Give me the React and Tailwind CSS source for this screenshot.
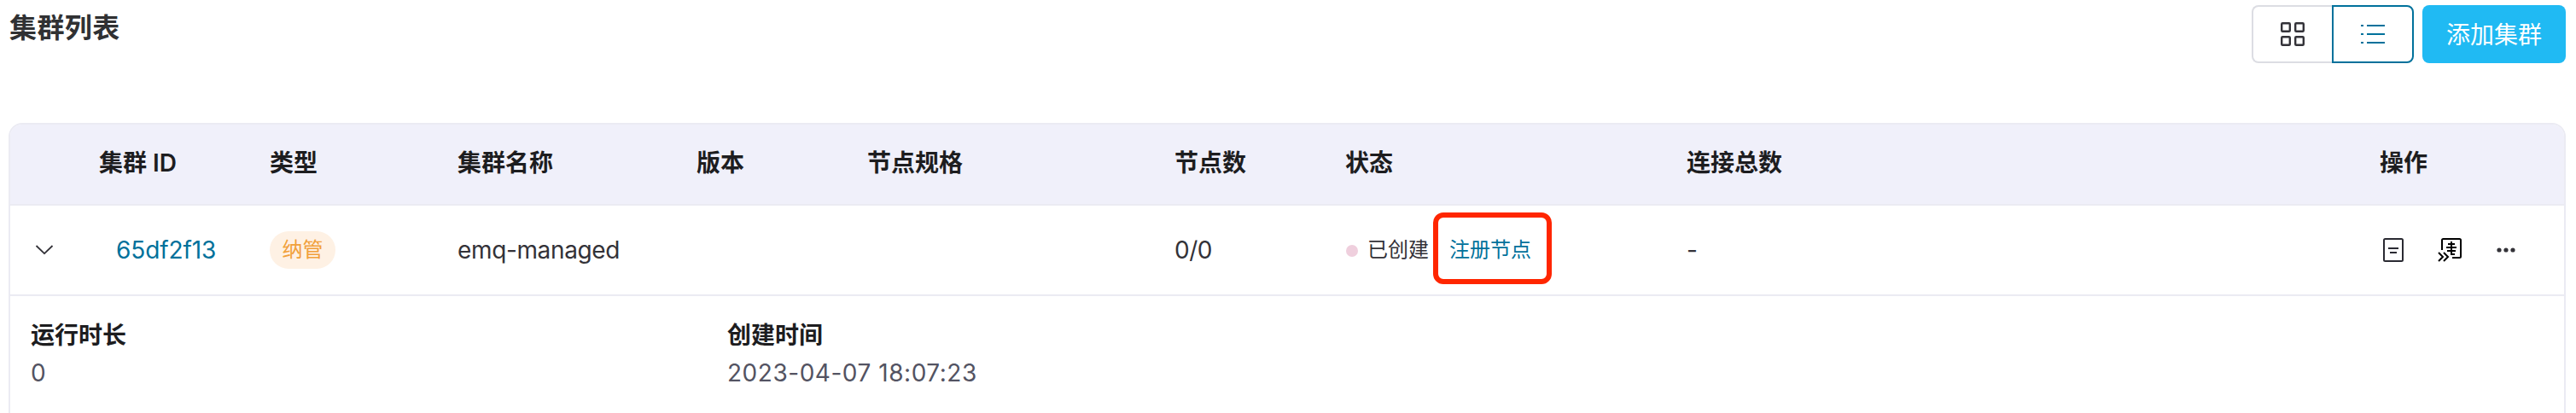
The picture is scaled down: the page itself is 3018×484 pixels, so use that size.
import React from 'react';

const columns = [
  { key: 'expand', title: '', width: 'w-[80px]' },
  { key: 'id', title: '集群 ID', width: 'w-[200px]' },
  { key: 'type', title: '类型', width: 'w-[220px]' },
  { key: 'name', title: '集群名称', width: 'w-[280px]' },
  { key: 'version', title: '版本', width: 'w-[200px]' },
  { key: 'spec', title: '节点规格', width: 'w-[360px]' },
  { key: 'nodes', title: '节点数', width: 'w-[200px]' },
  { key: 'status', title: '状态', width: 'w-[400px]' },
  { key: 'connections', title: '连接总数', width: 'w-[812px]' },
  { key: 'actions', title: '操作', width: 'w-[240px]' },
];

function GridIcon() {
  return (
    <svg width="28" height="28" viewBox="0 0 28 28" fill="none" stroke="#333238" strokeWidth="2.4">
      <rect x="1.2" y="1.2" width="9.6" height="9.6" rx="1" />
      <rect x="17.2" y="1.2" width="9.6" height="9.6" rx="1" />
      <rect x="1.2" y="17.2" width="9.6" height="9.6" rx="1" />
      <rect x="17.2" y="17.2" width="9.6" height="9.6" rx="1" />
    </svg>
  );
}

function ListIcon() {
  return (
    <svg width="28" height="24" viewBox="0 0 28 24" fill="#00719b">
      <rect x="0" y="1" width="3" height="2" />
      <rect x="7" y="1" width="21" height="2" />
      <rect x="0" y="11" width="3" height="2" />
      <rect x="7" y="11" width="21" height="2" />
      <rect x="0" y="21" width="3" height="2" />
      <rect x="7" y="21" width="21" height="2" />
    </svg>
  );
}

function ChevronIcon() {
  return (
    <svg width="22" height="12" viewBox="0 0 22 12" fill="none" stroke="#333238" strokeWidth="1.8">
      <path d="M1.5 1 L11 10.2 L20.5 1" strokeLinejoin="round" />
    </svg>
  );
}

function LogIcon() {
  return (
    <svg width="24" height="28" viewBox="0 0 24 28" fill="none" stroke="#2a2a32" strokeWidth="2">
      <rect x="1" y="1" width="22" height="26" rx="1.5" />
      <path d="M6 12h12M8 17h8" />
    </svg>
  );
}

function TransferIcon() {
  return (
    <svg width="28" height="28" viewBox="0 0 28 28" fill="none" stroke="#000" strokeWidth="2">
      <path d="M5 14V2.5Q5 1 6.5 1H25.5Q27 1 27 2.5V21.5Q27 23 25.5 23H17" />
      <path d="M16 4V20M12 7H20M10 11H22M11 15H21M16 19H20" />
      <path d="M1 17L6 22L1 27M7 17L12 22L7 27" />
    </svg>
  );
}

function MoreIcon() {
  return (
    <svg width="22" height="6" viewBox="0 0 22 6" fill="#333238">
      <circle cx="3" cy="3" r="2.6" />
      <circle cx="11" cy="3" r="2.6" />
      <circle cx="19" cy="3" r="2.6" />
    </svg>
  );
}

function Detail({ label, value, className }) {
  return (
    <div className={className}>
      <div className="text-[28px] leading-[46px] font-semibold text-[#1d1d1f]">{label}</div>
      <div className="text-[28px] leading-[42px] tracking-[0.53px] text-[#535362]">{value}</div>
    </div>
  );
}

export default function App() {
  return (
    <div className="h-[484px] w-[3018px] overflow-hidden bg-white pr-3 pl-[10px] font-[Inter,'Noto_Sans_CJK_SC',sans-serif] text-[28px] text-[#333238]">
      <header className="flex h-36 items-start justify-between pt-1.5">
        <h1 className="pt-[3px] pl-px text-[32px] leading-[48px] font-semibold tracking-[0.4px] text-[#303133]">集群列表</h1>
        <div className="flex gap-[10px]">
          <div className="flex">
            <button className="flex h-[68px] w-[94px] items-center justify-center rounded-l-lg border-2 border-r-0 border-[#dcdde3]">
              <GridIcon />
            </button>
            <button className="flex h-[68px] w-24 items-center justify-center rounded-r-lg border-2 border-[#00719b]">
              <ListIcon />
            </button>
          </div>
          <button className="h-[68px] w-[168px] rounded-lg bg-[#20baf3] pt-px text-[28px] leading-[68px] text-white">添加集群</button>
        </div>
      </header>

      <section className="h-[400px] overflow-hidden rounded-t-2xl border-2 border-[#ebebf3]">
        <div className="flex h-[95px] items-center border-b-2 border-[#ebebf3] bg-[#f0f0fa] pb-[3px]">
          {columns.map((column) => (
            <div key={column.key} className={`${column.width} shrink-0 pl-6 font-semibold text-[#1d1d1f]`}>
              {column.title}
            </div>
          ))}
        </div>

        <div className="flex h-[106px] items-center border-b-2 border-[#ebebf3]">
          <div className="w-[80px] shrink-0 pl-[29px]">
            <ChevronIcon />
          </div>
          <div className="w-[200px] shrink-0 pl-11 tracking-[-0.1px] text-[#00719b]">65df2f13</div>
          <div className="w-[220px] shrink-0 pl-6">
            <span className="flex h-11 w-[77px] items-center justify-center rounded-full bg-[#fef1e4] text-[24px] text-[#f1a03a]">
              纳管
            </span>
          </div>
          <div className="w-[280px] shrink-0 pl-6 tracking-[-0.36px]">emq-managed</div>
          <div className="w-[200px] shrink-0" />
          <div className="w-[360px] shrink-0" />
          <div className="w-[200px] shrink-0 pl-6 tracking-[-0.5px]">0/0</div>
          <div className="flex w-[400px] shrink-0 items-center pl-[25px] text-[24px]">
            <span className="mt-0.5 h-3.5 w-3.5 rounded-full bg-[#efcfdd]" />
            <span className="pl-[11px]">已创建</span>
            <span className="relative ml-6 text-[#00719b]">
              注册节点
              <span className="absolute -top-[26px] -left-[19px] h-[84px] w-[139px] rounded-xl border-[6px] border-[#ff2600]" />
            </span>
          </div>
          <div className="w-[812px] shrink-0 pl-6">-</div>
          <div className="flex w-[240px] shrink-0 items-center pl-[28px]">
            <LogIcon />
            <span className="pl-[40px]">
              <TransferIcon />
            </span>
            <span className="pl-[41px]">
              <MoreIcon />
            </span>
          </div>
        </div>

        <div className="flex pt-[23px] pl-6">
          <Detail className="w-[816px]" label="运行时长" value="0" />
          <Detail label="创建时间" value="2023-04-07 18:07:23" />
        </div>
      </section>
    </div>
  );
}
